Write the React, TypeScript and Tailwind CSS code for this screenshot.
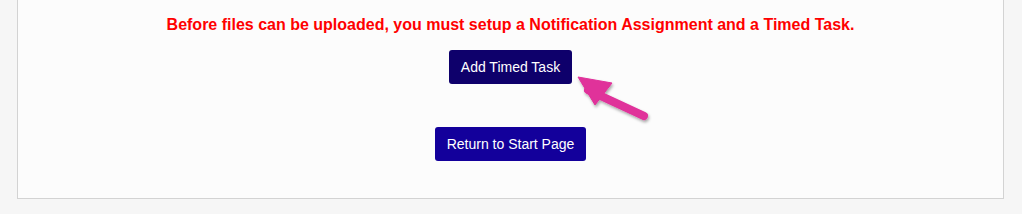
export default function App() {
  return (
    <div
      className="min-h-[214px] bg-[#f6f6f6] pl-[17px] pr-[18px] pb-[15px]"
      style={{ fontFamily: '"Liberation Sans", Arial, sans-serif' }}
    >
      <div className="relative flex flex-col items-center border-x border-b border-[#d3d3d3] bg-[#fcfcfc] pt-[16px] pb-[37px]">
        {/* Warning */}
        <p className="text-[16px] leading-[18px] font-bold text-[#ff0000]">
          Before files can be uploaded, you must setup a Notification Assignment and a Timed Task.
        </p>

        <button className="mt-[16px] h-[34px] w-[123px] rounded-[3px] bg-[#0e006b] text-[14px] text-white">
          Add Timed Task
        </button>

        <button className="mt-[43px] h-[34px] w-[151px] rounded-[3px] bg-[#13009b] text-[14px] text-white">
          Return to Start Page
        </button>

        {/* Annotation arrow */}
        <svg
          className="absolute left-[542px] top-[60px]"
          width="100"
          height="75"
          viewBox="0 0 100 75"
        >
          <defs>
            <filter id="shadow" x="-20%" y="-20%" width="150%" height="150%">
              <feDropShadow dx="1" dy="2" stdDeviation="1.5" floodColor="#000" floodOpacity="0.35" />
            </filter>
          </defs>
          <g filter="url(#shadow)" fill="#e0309a" stroke="#e0309a">
            <line x1="28" y1="30" x2="84" y2="56" strokeWidth="8" strokeLinecap="round" />
            <polygon points="18,17 52,23 35,45" strokeWidth="1" strokeLinejoin="round" />
          </g>
        </svg>
      </div>
    </div>
  );
}
